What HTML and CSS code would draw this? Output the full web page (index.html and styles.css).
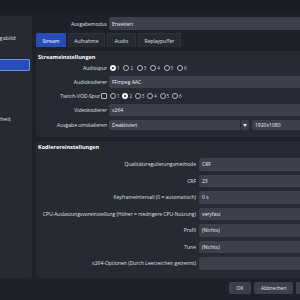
FILE: index.html
```html
<!DOCTYPE html>
<html lang="de">
<head>
    <meta charset="UTF-8">
    <meta name="viewport" content="width=device-width, initial-scale=1.0">
    <title>Einstellungen</title>
    <link rel="stylesheet" href="styles.css">
</head>
<body>
    <div class="topbar"></div>
    <div class="window">
        <aside class="sidebar">
            <ul class="nav">
                <li>Allgemein</li>
                <li>Erscheinungsbild</li>
                <li>Stream</li>
                <li class="active">Ausgabe</li>
                <li>Audio</li>
                <li>Video</li>
                <li>Hotkeys</li>
                <li>Barrierefreiheit</li>
                <li>Erweitert</li>
            </ul>
        </aside>
        <main class="content">
            <div class="mode-row">
                <span class="label">Ausgabemodus</span>
                <div class="field">Erweitert</div>
            </div>

            <div class="tabs">
                <div class="tab active">Stream</div>
                <div class="tab">Aufnahme</div>
                <div class="tab">Audio</div>
                <div class="tab">Replaypuffer</div>
            </div>

            <section class="group group-stream">
                <h3>Streameinstellungen</h3>
                <div class="form form-stream">
                    <span class="label">Audiospur</span>
                    <div class="radios">
                        <span class="radio checked"></span><span class="num">1</span>
                        <span class="radio"></span><span class="num">2</span>
                        <span class="radio"></span><span class="num">3</span>
                        <span class="radio"></span><span class="num">4</span>
                        <span class="radio"></span><span class="num">5</span>
                        <span class="radio"></span><span class="num">6</span>
                    </div>

                    <span class="label">Audiokodierer</span>
                    <div class="field">FFmpeg AAC</div>

                    <span class="label">Twitch-VOD-Spur <span class="checkbox"></span></span>
                    <div class="radios radios-small">
                        <span class="radio"></span><span class="num">1</span>
                        <span class="radio checked"></span><span class="num">2</span>
                        <span class="radio"></span><span class="num">3</span>
                        <span class="radio"></span><span class="num">4</span>
                        <span class="radio"></span><span class="num">5</span>
                        <span class="radio"></span><span class="num">6</span>
                    </div>

                    <span class="label">Videokodierer</span>
                    <div class="field">x264</div>

                    <span class="label row-spaced">Ausgabe umskalieren</span>
                    <div class="rescale row-spaced">
                        <div class="field combo">
                            <span class="combo-text">Deaktiviert</span>
                            <span class="combo-arrow">
                                <svg width="4" height="3" viewBox="0 0 4 3"><path d="M0 0H4L2 3Z" fill="#e8e8ea"/></svg>
                            </span>
                        </div>
                        <div class="field">1920x1080</div>
                    </div>
                </div>
            </section>

            <section class="group group-encoder">
                <h3>Kodierereinstellungen</h3>
                <div class="form form-encoder">
                    <span class="label">Qualitätsregulierungsmethode</span>
                    <div class="field">CRF</div>

                    <span class="label">CRF</span>
                    <div class="field">23</div>

                    <span class="label">Keyframeintervall (0 = automatisch)</span>
                    <div class="field">0 s</div>

                    <span class="label">CPU-Auslastungsvoreinstellung (Höher = niedrigere CPU-Nutzung)</span>
                    <div class="field">veryfast</div>

                    <span class="label">Profil</span>
                    <div class="field">(Nichts)</div>

                    <span class="label">Tune</span>
                    <div class="field">(Nichts)</div>

                    <span class="label">x264-Optionen (Durch Leerzeichen getrennt)</span>
                    <div class="field"></div>
                </div>
            </section>
        </main>
    </div>
    <div class="footer">
        <button>OK</button>
        <button>Abbrechen</button>
        <button>Übernehmen</button>
    </div>
</body>
</html>
```

FILE: styles.css
```css
body {
    margin: 0;
    width: 300px;
    height: 300px;
    overflow: hidden;
    background-color: #1f212a;
    font-family: "Open Sans", "DejaVu Sans", sans-serif;
    font-size: 5px;
    color: #dfe0e4;
}

.topbar {
    height: 13px;
    background-color: #1b1c22;
}

.window {
    display: flex;
    gap: 4px;
    padding-top: 3px;
    height: 262px;
}

.sidebar {
    width: 32px;
    flex-shrink: 0;
    background-color: #272a33;
    border-radius: 0 3px 3px 0;
    overflow: hidden;
}

.nav {
    list-style: none;
    margin: 0 2px 0 -40px;
    padding: 2px 0 0;
    font-size: 6px;
}

.nav li {
    height: 12.5px;
    line-height: 12.5px;
    margin-bottom: 1px;
    padding-left: 8px;
    white-space: nowrap;
    border-radius: 2px;
}

.nav li.active {
    background-color: #284cb8;
    box-shadow: inset 0 0 0 1px #6f8fe6;
}

.content {
    width: 300px;
    flex-shrink: 0;
    display: flex;
    flex-direction: column;
}

.label {
    text-align: right;
    white-space: nowrap;
    display: flex;
    align-items: center;
    justify-content: flex-end;
}

.field {
    background-color: #3c404b;
    border-radius: 2px;
    padding-left: 3px;
    display: flex;
    align-items: center;
    white-space: nowrap;
    color: #eceef1;
}

.mode-row {
    display: grid;
    grid-template-columns: 71px 1fr;
    column-gap: 2px;
    height: 13px;
    margin-top: 1px;
}

.tabs {
    display: flex;
    gap: 2px;
    height: 14px;
    margin-top: 3px;
}

.tab {
    min-width: 29px;
    padding: 0 5.5px;
    box-sizing: border-box;
    display: flex;
    align-items: center;
    justify-content: center;
    background-color: #272a33;
    border: 1px solid #30343e;
    border-bottom: none;
    border-radius: 2px 2px 0 0;
}

.tab.active {
    background-color: #284cb8;
    border-color: #284cb8;
    color: #fff;
}

.group {
    background-color: #272a33;
    border-radius: 3px;
    margin-top: 4px;
    box-sizing: border-box;
}

.group h3 {
    margin: 0;
    padding-left: 2px;
    font-size: 5.5px;
    font-weight: 700;
    color: #fff;
    height: 11px;
    line-height: 12px;
}

.group-stream {
    height: 86px;
}

.group-encoder {
    flex: 1;
}

.form {
    display: grid;
    column-gap: 2px;
}

.form-stream {
    grid-template-columns: 71px 1fr;
    grid-auto-rows: 12px;
    row-gap: 2px;
}

.form-stream .row-spaced {
    margin-top: 2px;
}

.form-encoder {
    grid-template-columns: 160px 1fr;
    column-gap: 3px;
    grid-auto-rows: 12.5px;
    row-gap: 4px;
    margin-top: 6px;
}

.radios {
    display: flex;
    align-items: center;
    padding-left: 1px;
}

.radio {
    width: 4px;
    height: 4px;
    border: 1px solid #b9bbc1;
    border-radius: 50%;
    background-color: #1f212a;
}

.radio.checked {
    width: 2px;
    height: 2px;
    border: 2px solid #f2f2f4;
    background-color: #1f212a;
}

.num {
    font-size: 4.5px;
    margin: 0 3.8px 0 1px;
    color: #d4d5d9;
}

.radios-small .num {
    margin-right: 2.8px;
}

.checkbox {
    display: inline-block;
    width: 4px;
    height: 4px;
    border: 1px solid #b9bbc1;
    border-radius: 1px;
    margin-left: 1px;
}

.rescale {
    display: flex;
    gap: 3px;
}

.combo {
    width: 140px;
    padding: 0;
    flex-shrink: 0;
    box-sizing: border-box;
}

.combo-text {
    flex: 1;
    padding-left: 3px;
}

.combo-arrow {
    width: 8px;
    height: 100%;
    border-left: 1px solid #272a33;
    display: flex;
    align-items: center;
    justify-content: center;
}

.rescale .field:last-child {
    flex: 1;
}

.footer {
    display: flex;
    gap: 3px;
    padding: 4px 0 0 229px;
}

button {
    font-family: inherit;
    font-size: 5px;
    color: #e6e7ea;
    background-color: #3c404b;
    border: none;
    border-radius: 2px;
    height: 12px;
    min-width: 22px;
    padding: 0 7px;
    flex-shrink: 0;
}
```
